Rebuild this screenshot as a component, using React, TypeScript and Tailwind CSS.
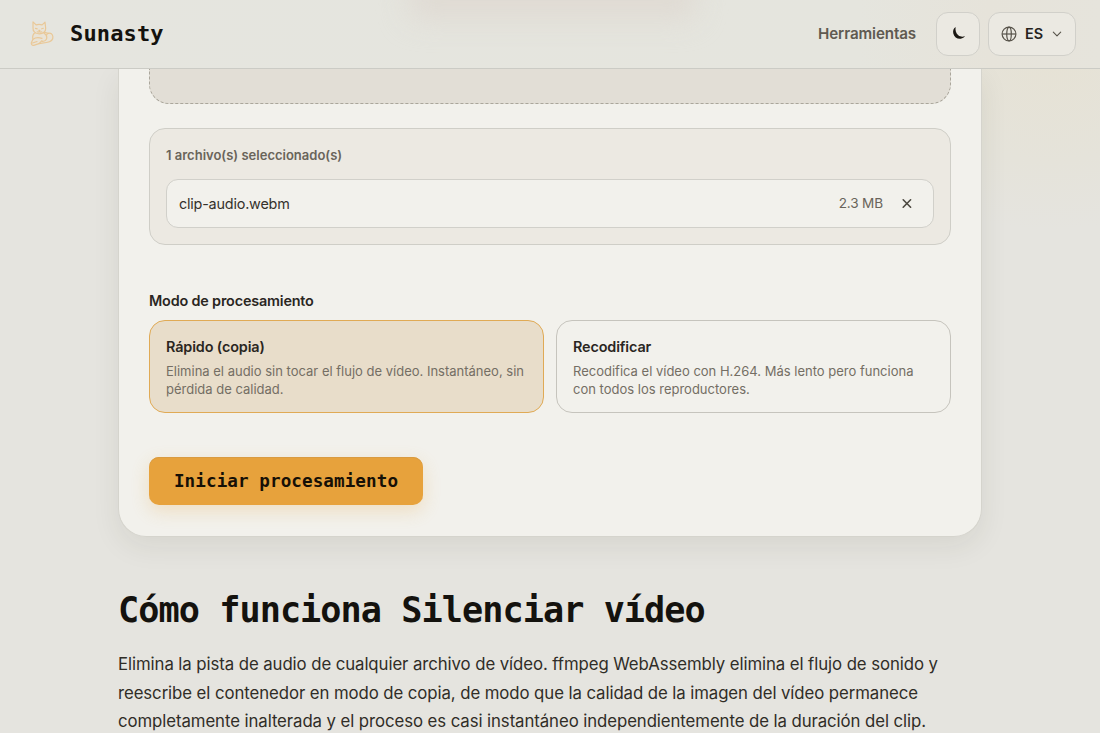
import React from "react";

const mono = "font-['DejaVu_Sans_Mono',monospace] font-bold";

function CatLogo() {
  return (
    <svg className="h-7 w-7" viewBox="0 0 28 28" fill="none" stroke="#e9c898" strokeWidth="1.200" strokeLinecap="round" strokeLinejoin="round">
      <path fill="#e9e3d6" d="M7.500 13C5.500 15 5.300 17 6 19.200l-1.600 3.200c-.5 1.800.6 3.300 2.400 3l5.200-1.800 7.500-1.100c4.200-.6 6.700-2.700 6.400-5.700-.3-2.700-2.200-4.100-4.400-3.500L16 12z" />
      <path fill="#e9e4d8" d="M6 1.800 9.100 4.900c1.900-.6 4.100-.6 6 0L18 2.200l.7 6.100c.2 3.300-2.600 5.500-6.400 5.500S5.700 11.300 6 8z" />
      <path d="m8.500 8.300 1.700.5M14.700 8.800l1.600-.5M11.900 10.300h1l-.5.600zM10.200 11.800c1 .6 1.800.2 2.200-.6.4.8 1.300 1.200 2.300.6" />
      <path d="M17 13.200c2 1.300 3.200 3.300 2.700 5.300-.4 1.900-2 2.700-4.200 3M21.500 13.300c-2 .6-2.500 2.500-1.800 4.200M6 19.200c2.600-1.900 5.800-1.800 9-.9M5.500 23l4.500-1.500M12 23.600l3-3" />
    </svg>
  );
}

function Header() {
  return (
    <header className="relative h-[69px] shrink-0 border-b border-[#cbcbc5] bg-[linear-gradient(90deg,#e5e5df_0%,#e5e5de_78%,#e6e3da_90%,#e6e4dc_100%)]">
      <div className="absolute inset-0 overflow-hidden">
        <div className="absolute -top-8 left-[408px] h-[52px] w-[288px] rounded-xl bg-[#dfd8d1]/80 blur-[14px]" />
      </div>
      <div className="relative flex h-[68px] items-center justify-between pl-[27px] pr-6">
        <div className="flex items-center gap-[15px]">
          <CatLogo />
          <span className={`${mono} text-[22px] leading-[28px] tracking-[0.15px] text-[#14120e]`}>Sunasty</span>
        </div>
        <div className="flex items-center">
          <a className="mr-5 text-[15.2px] font-semibold tracking-[-0.13px] text-[#5f5a51]">Herramientas</a>
          <button className="mr-2 flex h-11 w-11 items-center justify-center rounded-xl border border-[#d1d0ca] bg-[#ebe9e2]">
            <svg className="h-4 w-4" viewBox="0 0 16 16" fill="#1b1813">
              <path d="M5.600 1C3.400 2.200 2.700 4.800 3.300 7.400c.9 3.700 3.900 5.700 7.400 5.300 2-.2 3.400-1.100 4.300-2.600-2.300.9-4.700.7-6.700-.9C6.100 7.400 5.100 4.500 5.600 1z" />
            </svg>
          </button>
          <button className="flex h-11 w-[88px] items-center rounded-xl border border-[#d1d0ca] bg-[#ebe9e2] pl-3">
            <svg className="h-4 w-4" viewBox="0 0 16 16" fill="none" stroke="#57534a" strokeWidth="1.200">
              <circle cx="8" cy="8" r="6.900" />
              <ellipse cx="8" cy="8" rx="2.300" ry="6.900" />
              <path d="M1.200 8h13.600" />
            </svg>
            <span className="ml-2 text-[14.4px] font-semibold text-[#26231d]">ES</span>
            <svg className="ml-2 h-3 w-3" viewBox="0 0 12 12" fill="none" stroke="#57534a" strokeWidth="1.100" strokeLinecap="round" strokeLinejoin="round">
              <path d="m2.300 4.200 3.700 3.700 3.700-3.700" />
            </svg>
          </button>
        </div>
      </div>
    </header>
  );
}

function FileList() {
  return (
    <section className="mt-6 h-[117px] rounded-2xl border border-[#cfcec7] bg-[#ece9e2] px-4">
      <p className="mt-4 text-[13px] leading-[20px] font-semibold text-[#69645a]">1 archivo(s) seleccionado(s)</p>
      <div className="mt-[14px] flex h-[49px] items-center rounded-xl border border-[#d1d0ca] bg-[#f2f1ec] px-3">
        <span className="flex-1 text-[14.4px] tracking-[-0.2px] text-[#35322c]">clip-audio.webm</span>
        <span className="text-[13.6px] tracking-[-0.15px] text-[#69645a]">2.3 MB</span>
        <svg className="ml-[18px] mr-2 h-3 w-3" viewBox="0 0 12 12" stroke="#4b473f" strokeWidth="1.600" strokeLinecap="round">
          <path d="m2.200 1.800 7.400 7.400m0-7.400-7.400 7.400" />
        </svg>
      </div>
    </section>
  );
}

function Mode({ title, text, className }: { title: string; text: string; className: string }) {
  return (
    <div className={`h-[93px] rounded-2xl border px-4 pt-4 ${className}`}>
      <h3 className="text-[14.4px] leading-[20px] font-semibold tracking-[-0.13px] text-[#2a261f]">{title}</h3>
      <p className="mt-[5px] text-[13px] leading-[18px] text-[#746e64]">{text}</p>
    </div>
  );
}

export default function App() {
  return (
    <div className="flex h-[733px] w-full flex-col overflow-hidden bg-[#e5e4df] bg-[radial-gradient(ellipse_210px_170px_at_1050px_60px,#e6e2d5_0%,#e5e3da_60%,transparent_100%)] font-[Inter,sans-serif]">
      <Header />
      <main className="mx-auto w-[864px]">
        <section className="h-[468px] rounded-b-[28px] border border-t-0 border-[#d5d4cd] bg-[#f2f1ec] px-[30px] shadow-[0_10px_28px_rgba(50,45,30,0.08)]">
          <div className="h-[35px] rounded-b-[20px] border border-t-0 border-dashed border-[#aaa69b] bg-[#e2ded6]" />
          <FileList />
          <h2 className="mt-[46px] text-[14.4px] leading-[20px] font-semibold tracking-[-0.18px] text-[#2a261f]">Modo de procesamiento</h2>
          <div className="mt-[9px] grid grid-cols-2 gap-3">
            <Mode title="Rápido (copia)" text="Elimina el audio sin tocar el flujo de vídeo. Instantáneo, sin pérdida de calidad." className="border-[#e0aa55] bg-[#e8ddca]" />
            <Mode title="Recodificar" text="Recodifica el vídeo con H.264. Más lento pero funciona con todos los reproductores." className="border-[#c6c4bd]" />
          </div>
          <button className={`${mono} mt-11 flex h-12 w-[274px] items-center justify-center rounded-[10px] bg-[#e7a23c] text-[17.6px] tracking-[0.08px] text-[#161006] shadow-[0_6px_18px_rgba(231,162,60,0.24),inset_0_1px_0_#d99b41]`}>
            Iniciar procesamiento
          </button>
        </section>
        <h2 className={`${mono} mt-[51px] text-[35.2px] leading-[44px] tracking-[-0.95px] whitespace-nowrap text-[#14120e]`}>Cómo funciona Silenciar vídeo</h2>
        <p className="mt-[18px] text-[16.8px] leading-[28.5px] tracking-[-0.085px] whitespace-nowrap text-[#302d27]">
          Elimina la pista de audio de cualquier archivo de vídeo. ffmpeg WebAssembly elimina el flujo de sonido y<br />
          reescribe el contenedor en modo de copia, de modo que la calidad de la imagen del vídeo permanece<br />
          completamente inalterada y el proceso es casi instantáneo independientemente de la duración del clip.
        </p>
      </main>
    </div>
  );
}
